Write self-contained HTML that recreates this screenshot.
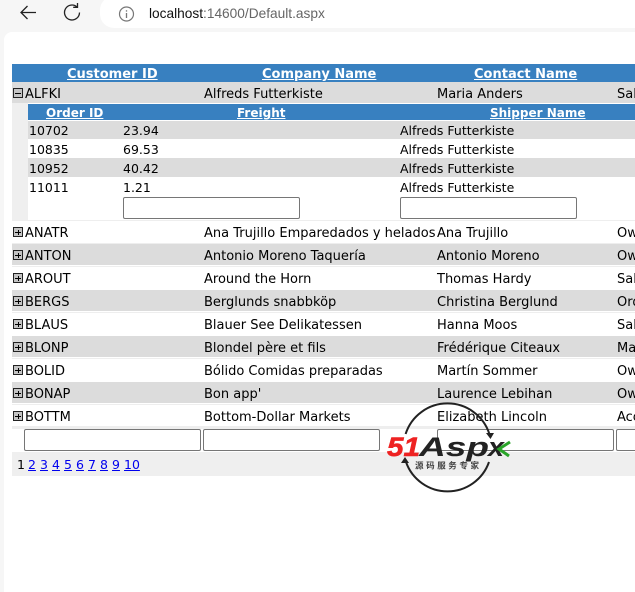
<!DOCTYPE html>
<html><head><meta charset="utf-8"><style>
html,body{margin:0;padding:0;width:635px;height:585px;overflow:hidden;background:#f6f6f6;font-family:"DejaVu Sans",sans-serif;font-size:13px;color:#000}
div,span,a{position:absolute;white-space:nowrap}
.t{line-height:16px}
.d{font-size:12.5px}
.h{color:#fff;font-weight:bold;text-decoration:underline;line-height:16px}
.s{font-size:12px}
.inp{background:#fff;border:1px solid #767676;border-radius:2px;box-sizing:border-box;height:22px}
.r{left:12px;width:623px}
.pg{color:#00e;text-decoration:underline;top:457px;line-height:16px;font-size:12.5px}
.ic{left:13px;width:8px;height:8px;border:1px solid #222;background:#c4c4c4}
.ic:before{content:"";position:absolute;left:1px;top:4px;width:6px;height:1px;background:#000}
.ic.p:after{content:"";position:absolute;left:4px;top:2px;width:1px;height:5px;background:#000}
</style></head><body>
<svg style="position:absolute;left:0;top:0" width="100" height="30"><path d="M36 12.5H21M27.5 6L21 12.5L27.5 19" fill="none" stroke="#222" stroke-width="1.3"/><path d="M79.5 12.5a7.5 7.5 0 1 1-2.4-5.5M77.5 3v4.3h-4.3" fill="none" stroke="#222" stroke-width="1.3"/></svg>
<div style="left:100px;top:-4px;width:560px;height:32px;background:#fff;border-radius:14px"></div>
<svg style="position:absolute;left:117.5px;top:5.5px" width="17" height="17"><circle cx="8.5" cy="8" r="7" fill="none" stroke="#777" stroke-width="1.2"/><path d="M8.5 7v5M8.5 4.2v1.4" stroke="#777" stroke-width="1.3"/></svg>
<div class="t" style="left:149px;top:6px;font-family:'Liberation Sans',sans-serif;font-size:13.7px;color:#111">localhost<span style="position:static;color:#666">:14600/Default.aspx</span></div>
<div style="left:4px;top:32px;width:640px;height:560px;background:#fff;border-radius:8px 0 0 0"></div>

<div class="r" style="top:64px;height:18px;background:#3880c0"></div>
<a class="h" style="left:67px;top:67px">Customer ID</a>
<a class="h" style="left:262px;top:67px">Company Name</a>
<a class="h" style="left:474px;top:67px">Contact Name</a>

<div class="r" style="top:82px;height:21px;background:#dcdcdc"></div>
<div class="ic" style="top:88px"></div>
<div class="t" style="left:25px;top:87px">ALFKI</div><div class="t" style="left:204px;top:87px">Alfreds Futterkiste</div><div class="t" style="left:437px;top:87px">Maria Anders</div><div class="t" style="left:617px;top:87px">Sal</div>

<div style="left:12px;top:103px;width:16px;height:117px;background:#efefef"></div>
<div style="left:28px;top:104px;width:607px;height:16px;background:#3880c0"></div>
<a class="h s" style="left:46px;top:105px">Order ID</a>
<a class="h s" style="left:237px;top:105px">Freight</a>
<a class="h s" style="left:490px;top:105px">Shipper Name</a>

<div style="left:28px;top:121px;width:607px;height:18px;background:#dcdcdc"></div>
<div style="left:28px;top:158px;width:607px;height:19px;background:#dcdcdc"></div>
<div class="t d" style="left:29px;top:123px">10702</div><div class="t d" style="left:123px;top:123px">23.94</div><div class="t d" style="left:400px;top:123px">Alfreds Futterkiste</div>
<div class="t d" style="left:29px;top:142px">10835</div><div class="t d" style="left:123px;top:142px">69.53</div><div class="t d" style="left:400px;top:142px">Alfreds Futterkiste</div>
<div class="t d" style="left:29px;top:161px">10952</div><div class="t d" style="left:123px;top:161px">40.42</div><div class="t d" style="left:400px;top:161px">Alfreds Futterkiste</div>
<div class="t d" style="left:29px;top:180px">11011</div><div class="t d" style="left:123px;top:180px">1.21</div><div class="t d" style="left:400px;top:180px">Alfreds Futterkiste</div>
<div class="inp" style="left:123px;top:197px;width:177px"></div>
<div class="inp" style="left:400px;top:197px;width:177px"></div>
<div class="r" style="top:220px;height:1px;background:#eee"></div>

<div class="r" style="top:243px;height:2px;background:#eee"></div>
<div class="r" style="top:244px;height:21px;background:#dcdcdc"></div>
<div class="r" style="top:290px;height:21px;background:#dcdcdc"></div>
<div class="r" style="top:336px;height:21px;background:#dcdcdc"></div>
<div class="r" style="top:382px;height:21px;background:#dcdcdc"></div>
<div class="r" style="top:266px;height:1px;background:#eee"></div>
<div class="r" style="top:312px;height:1px;background:#eee"></div>
<div class="r" style="top:358px;height:1px;background:#eee"></div>
<div class="r" style="top:404px;height:1px;background:#eee"></div>

<div class="ic p" style="top:227px"></div><div class="t" style="left:25px;top:226px">ANATR</div><div class="t" style="left:204px;top:226px">Ana Trujillo Emparedados y helados</div><div class="t" style="left:437px;top:226px">Ana Trujillo</div><div class="t" style="left:617px;top:226px">Ow</div>
<div class="ic p" style="top:250px"></div><div class="t" style="left:25px;top:249px">ANTON</div><div class="t" style="left:204px;top:249px">Antonio Moreno Taquería</div><div class="t" style="left:437px;top:249px">Antonio Moreno</div><div class="t" style="left:617px;top:249px">Ow</div>
<div class="ic p" style="top:273px"></div><div class="t" style="left:25px;top:272px">AROUT</div><div class="t" style="left:204px;top:272px">Around the Horn</div><div class="t" style="left:437px;top:272px">Thomas Hardy</div><div class="t" style="left:617px;top:272px">Sal</div>
<div class="ic p" style="top:296px"></div><div class="t" style="left:25px;top:295px">BERGS</div><div class="t" style="left:204px;top:295px">Berglunds snabbköp</div><div class="t" style="left:437px;top:295px">Christina Berglund</div><div class="t" style="left:617px;top:295px">Ord</div>
<div class="ic p" style="top:319px"></div><div class="t" style="left:25px;top:318px">BLAUS</div><div class="t" style="left:204px;top:318px">Blauer See Delikatessen</div><div class="t" style="left:437px;top:318px">Hanna Moos</div><div class="t" style="left:617px;top:318px">Sal</div>
<div class="ic p" style="top:342px"></div><div class="t" style="left:25px;top:341px">BLONP</div><div class="t" style="left:204px;top:341px">Blondel père et fils</div><div class="t" style="left:437px;top:341px">Frédérique Citeaux</div><div class="t" style="left:617px;top:341px">Ma</div>
<div class="ic p" style="top:365px"></div><div class="t" style="left:25px;top:364px">BOLID</div><div class="t" style="left:204px;top:364px">Bólido Comidas preparadas</div><div class="t" style="left:437px;top:364px">Martín Sommer</div><div class="t" style="left:617px;top:364px">Ow</div>
<div class="ic p" style="top:388px"></div><div class="t" style="left:25px;top:387px">BONAP</div><div class="t" style="left:204px;top:387px">Bon app'</div><div class="t" style="left:437px;top:387px">Laurence Lebihan</div><div class="t" style="left:617px;top:387px">Ow</div>
<div class="ic p" style="top:411px"></div><div class="t" style="left:25px;top:410px">BOTTM</div><div class="t" style="left:204px;top:410px">Bottom-Dollar Markets</div><div class="t" style="left:437px;top:410px">Elizabeth Lincoln</div><div class="t" style="left:617px;top:410px">Acc</div>

<div class="r" style="top:426px;height:3px;background:#eee"></div>
<div class="inp" style="left:24px;top:429px;width:177px"></div>
<div class="inp" style="left:203px;top:429px;width:177px"></div>
<div class="inp" style="left:437px;top:429px;width:177px"></div>
<div class="inp" style="left:616px;top:429px;width:40px"></div>

<div class="r" style="top:452px;height:24px;background:#efefef"></div>
<div class="t" style="left:17px;top:457px;font-size:12.5px">1</div>
<a class="pg" style="left:28px">2</a><a class="pg" style="left:40px">3</a><a class="pg" style="left:52px">4</a><a class="pg" style="left:64px">5</a><a class="pg" style="left:76px">6</a><a class="pg" style="left:88px">7</a><a class="pg" style="left:100px">8</a><a class="pg" style="left:112px">9</a><a class="pg" style="left:124px">10</a>

<svg style="position:absolute;left:385px;top:400px" width="135" height="100">
<path d="M20.600 34A44 44 0 0 1 104.400 34" fill="none" stroke="#222" stroke-width="2"/>
<path d="M104 62A44 44 0 0 1 21 62" fill="none" stroke="#222" stroke-width="2"/>
<path d="M101 33L109 33L105.500 39ZM16 63L24 63L20 57Z" fill="#222"/>
<text x="2" y="56" font-family="'Liberation Sans',sans-serif" font-style="italic" font-weight="bold" font-size="27" fill="#ee2222" textLength="33" lengthAdjust="spacingAndGlyphs" stroke="#ee2222" stroke-width="0.6">51</text>
<text x="34" y="56" font-family="'Liberation Sans',sans-serif" font-style="italic" font-weight="bold" font-size="27" fill="#222" textLength="70" lengthAdjust="spacingAndGlyphs">Asp</text>
<text x="103" y="56" font-family="'Liberation Sans',sans-serif" font-style="italic" font-weight="bold" font-size="27" fill="#222" textLength="16" lengthAdjust="spacingAndGlyphs">x</text>
<path d="M125 42L114 49L124 56" fill="none" stroke="#2aa52a" stroke-width="3"/>
<text x="30" y="68.500" font-family="'Noto Sans CJK SC',sans-serif" font-size="8.500" font-weight="bold" fill="#444" textLength="64">源码服务专家</text>
</svg>
</body></html>
